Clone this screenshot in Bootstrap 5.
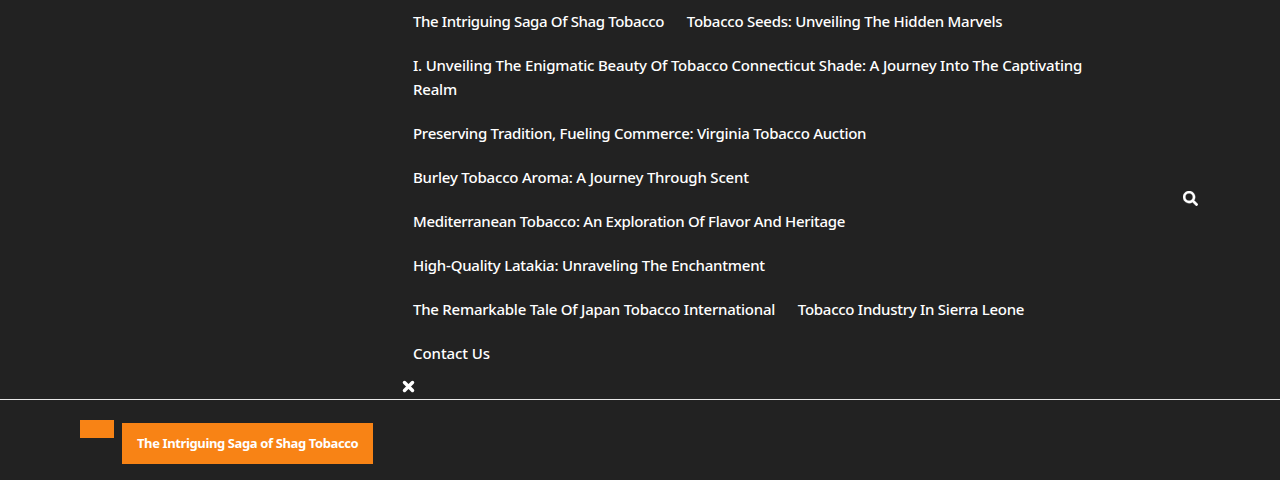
<!DOCTYPE html>
<html lang="en"><head><meta charset="utf-8"><title>Tobacco</title>
<link href="https://cdn.jsdelivr.net/npm/bootstrap@5.3.0/dist/css/bootstrap.min.css" rel="stylesheet">
<script src="https://cdn.jsdelivr.net/npm/bootstrap@5.3.0/dist/js/bootstrap.bundle.min.js" defer></script>
<style>
body{background:#222;color:#fff;font-family:"Noto Sans",sans-serif;overflow:hidden}
.site-header{height:400px;border-bottom:1px solid #e9e9e9}
.wrap{padding:0 80px}
.wrap-main{padding-top:20px}
.brand-space{width:323px}
.menu-area{width:712px}
.menu-list{column-gap:2.8px}
.menu-list a{display:block;padding:9px 10px 11px;font-size:15px;line-height:24px;font-weight:500}
.menu-list span{letter-spacing:var(--track)}
.close-btn{line-height:0;padding-top:4px;margin-left:-1px}
.search-btn{line-height:0;padding:0 2px 3px 0}
.tag-mark{width:34px;height:18px;background:#f88315}
.current-box{background:#f88315;height:41px;width:251px;margin:3px 0 0 8px;padding:0 15px;font-size:13px;font-weight:700;line-height:41px;white-space:nowrap;letter-spacing:-.38px}
</style></head><body>
<header class="site-header"><div class="wrap d-flex h-100">
<div class="brand-space flex-shrink-0"></div>
<nav class="menu-area flex-shrink-0">
<ul class="menu-list list-unstyled d-flex flex-wrap mb-0">
<li><a class="text-reset text-decoration-none" href="#"><span style="--track:-.37px">The Intriguing Saga Of Shag Tobacco</span></a></li>
<li><a class="text-reset text-decoration-none" href="#"><span style="--track:-.26px">Tobacco Seeds: Unveiling The Hidden Marvels</span></a></li>
<li><a class="text-reset text-decoration-none" href="#"><span style="--track:-.2px">I. Unveiling The Enigmatic Beauty Of Tobacco Connecticut Shade: A Journey Into The Captivating Realm</span></a></li>
<li><a class="text-reset text-decoration-none" href="#"><span style="--track:-.277px">Preserving Tradition, Fueling Commerce: Virginia Tobacco Auction</span></a></li>
<li class="w-100"><a class="text-reset text-decoration-none" href="#"><span style="--track:-.2px">Burley Tobacco Aroma: A Journey Through Scent</span></a></li>
<li><a class="text-reset text-decoration-none" href="#"><span style="--track:-.3px">Mediterranean Tobacco: An Exploration Of Flavor And Heritage</span></a></li>
<li class="w-100"><a class="text-reset text-decoration-none" href="#"><span style="--track:-.233px">High-Quality Latakia: Unraveling The Enchantment</span></a></li>
<li><a class="text-reset text-decoration-none" href="#"><span style="--track:-.25px">The Remarkable Tale Of Japan Tobacco International</span></a></li>
<li><a class="text-reset text-decoration-none" href="#"><span style="--track:-.27px">Tobacco Industry In Sierra Leone</span></a></li>
<li class="w-100"><a class="text-reset text-decoration-none" href="#"><span style="--track:-.07px">Contact Us</span></a></li>
</ul>
<div class="close-btn"><svg width="13" height="13" viewBox="0 0 13 13"><path d="M2.500 2.500l8 8M10.500 2.500l-8 8" stroke="#fff" stroke-width="3.500" stroke-linecap="round"/></svg></div>
</nav>
<div class="search-btn ms-auto d-flex align-items-center"><svg width="15" height="15" viewBox="0 0 512 512" fill="#fff" stroke="#fff" stroke-width="10"><path d="M505 442.700 405.300 343c-4.500-4.500-10.600-7-17-7H372c27.600-35.300 44-79.700 44-128C416 93.100 322.900 0 208 0S0 93.100 0 208s93.100 208 208 208c48.300 0 92.700-16.400 128-44v16.300c0 6.400 2.500 12.500 7 17l99.700 99.700c9.400 9.400 24.600 9.400 33.900 0l28.300-28.300c9.400-9.400 9.400-24.600.1-34zM208 336c-70.700 0-128-57.200-128-128 0-70.700 57.200-128 128-128 70.700 0 128 57.200 128 128 0 70.700-57.200 128-128 128z"/></svg></div>
</div></header>
<main class="wrap wrap-main d-flex align-items-start"><div class="tag-mark"></div><div class="current-box">The Intriguing Saga of Shag Tobacco</div></main>
</body></html>
